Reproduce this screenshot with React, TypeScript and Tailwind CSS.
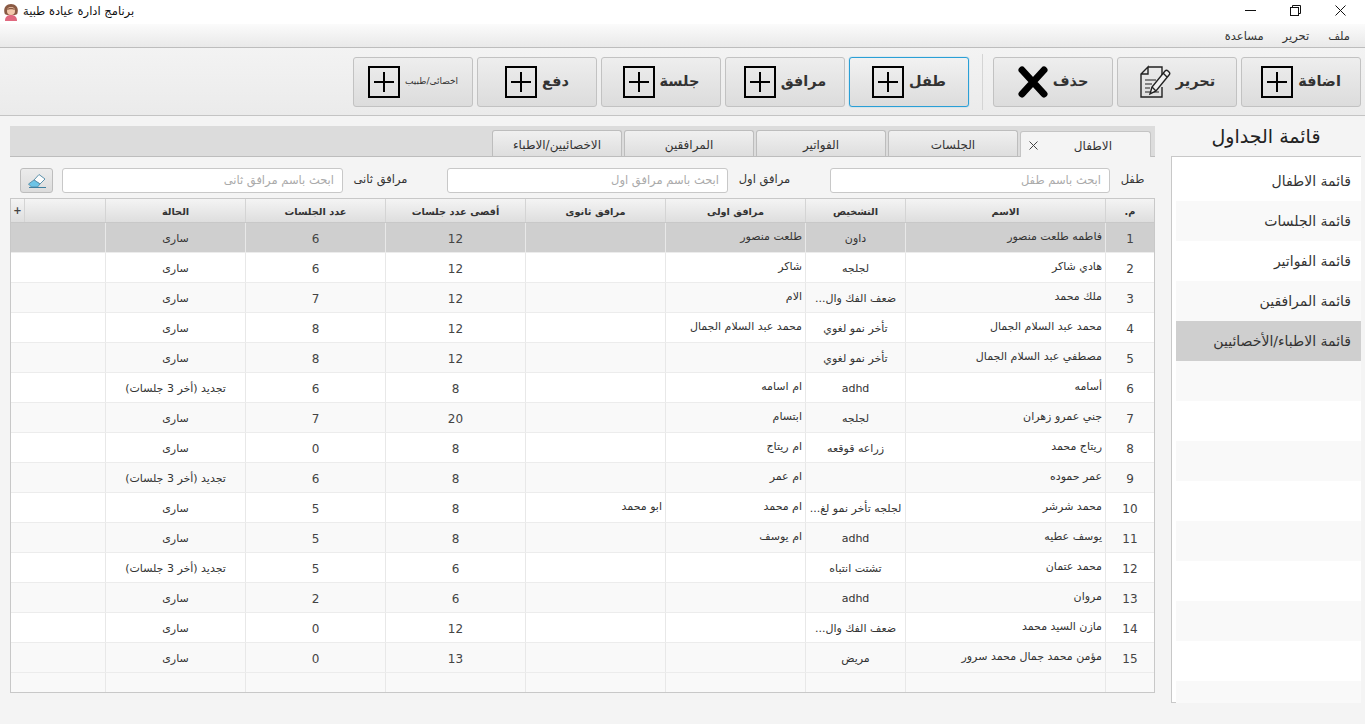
import React from "react";

const FONT = "font-['DejaVu_Sans','Noto_Sans',sans-serif]";

const PlusBox = ({ s = 32 }: { s?: number }) => (
  <svg width={s} height={s} viewBox="0 0 32 32" className="shrink-0">
    <rect x="1" y="1" width="30" height="30" fill="none" stroke="#000" strokeWidth="2" />
    <path d="M16 6V26M6 16H26" stroke="#000" strokeWidth="2" />
  </svg>
);

const XIcon = () => (
  <svg width="30" height="32" viewBox="0 0 30 32" className="shrink-0">
    <path d="M4 4L26 28M26 4L4 28" stroke="#000" strokeWidth="7" strokeLinecap="round" />
  </svg>
);

const NoteIcon = () => (
  <svg width="32" height="34" viewBox="0 0 32 34" className="shrink-0" fill="none" stroke="#222" strokeWidth="1.4">
    <path d="M9 2H23V10M23 22V32H2V9L9 2V9H2" />
    <path d="M6 15H17M6 19H13M6 23H11M6 27H20" strokeWidth="1.2" />
    <path d="M11 29L13 22L26 6C27 5 28 5 29 6L30 7C31 8 31 9 30 10L17 26Z" fill="#f0f0f0" />
    <path d="M13 22L17 26M24 8L28 12" />
  </svg>
);

const Eraser = () => (
  <svg width="20" height="16" viewBox="0 0 20 16">
    <path d="M7 7L12 1.5L18 6L13 11Z" fill="#fdfdfd" stroke="#5d93ad" strokeWidth="1" />
    <path d="M1.5 11L7 7L13 11L10.5 14H4.5Z" fill="#6cc4e6" stroke="#5d93ad" strokeWidth="1" />
    <path d="M2 14.5H19" stroke="#3f7f9f" strokeWidth="1" />
  </svg>
);

const Avatar = () => (
  <svg width="16" height="18" viewBox="0 0 16 18" className="shrink-0">
    <path d="M1.5 10C0 4 4 1 8 1C12 1 16 4 14.5 10C14 12 12 12 8 12C4 12 2 12 1.5 10Z" fill="#8a5a44" />
    <circle cx="8" cy="8" r="4" fill="#f3c9ac" />
    <path d="M4 7C5 4 11 4 12 7C10 6 6 6 4 7Z" fill="#8a5a44" />
    <path d="M2 18C2 13 5 12 8 12C11 12 14 13 14 18Z" fill="#e0697f" />
  </svg>
);

const Btn = ({ label, icon, focus, small }: { label: string; icon: React.ReactNode; focus?: boolean; small?: boolean }) => (
  <div
    className={`w-[120px] h-[50px] rounded-[3px] flex items-center justify-center gap-[5px] bg-gradient-to-b to-[#dcdcdc] border ${
      focus ? "border-[#2a9fd6] shadow-[0_0_1px_#2a9fd6] from-[#f2f2f2]" : "border-[#c2c2c2] from-[#eeeeee]"
    }`}
  >
    <span className={small ? "text-[9px] text-[#333] w-[54px] text-center" : "text-[14.5px] font-semibold text-[#333] pt-[1px]"}>{label}</span>
    {icon}
  </div>
);

const widths = ["w-[49px]", "w-[200px]", "w-[100px]", "w-[140px]", "w-[140px]", "w-[140px]", "w-[140px]", "w-[140px]"];

const heads = ["م.", "الاسم", "التشخيص", "مرافق اولى", "مرافق ثانوى", "أقصى عدد جلسات", "عدد الجلسات", "الحالة"];

const renew = "تجديد (أخر 3 جلسات)";
const ok = "سارى";
const rows: string[][] = [
  ["1", "فاطمه طلعت منصور", "داون", "طلعت منصور", "", "12", "6", ok],
  ["2", "هادي شاكر", "لجلجه", "شاكر", "", "12", "6", ok],
  ["3", "ملك محمد", "ضعف الفك وال...", "الام", "", "12", "7", ok],
  ["4", "محمد عبد السلام الجمال", "تأخر نمو لغوي", "محمد عبد السلام الجمال", "", "12", "8", ok],
  ["5", "مصطفي عبد السلام الجمال", "تأخر نمو لغوي", "", "", "12", "8", ok],
  ["6", "أسامه", "adhd", "ام اسامه", "", "8", "6", renew],
  ["7", "جني عمرو زهران", "لجلجه", "ابتسام", "", "20", "7", ok],
  ["8", "ريتاج محمد", "زراعه قوقعه", "ام ريتاج", "", "8", "0", ok],
  ["9", "عمر حموده", "", "ام عمر", "", "8", "6", renew],
  ["10", "محمد شرشر", "لجلجه تأخر نمو لغ...", "ام محمد", "ابو محمد", "8", "5", ok],
  ["11", "يوسف عطيه", "adhd", "ام يوسف", "", "8", "5", ok],
  ["12", "محمد عتمان", "تشتت انتباه", "", "", "6", "5", renew],
  ["13", "مروان", "adhd", "", "", "6", "2", ok],
  ["14", "مازن السيد محمد", "ضعف الفك وال...", "", "", "12", "0", ok],
  ["15", "مؤمن محمد جمال محمد سرور", "مريض", "", "", "13", "0", ok],
];

const Cell = ({ i, text }: { i: number; text: string }) => {
  const right = i === 1 || i === 3 || i === 4;
  const num = i === 0 || i === 5 || i === 6;
  return (
    <div
      className={`${widths[i]} shrink-0 h-full border-l border-[#e8e8e8] flex whitespace-nowrap overflow-hidden ${
        num ? "text-[12px] text-[#444]" : "text-[11px] text-[#333]"
      } ${right ? "items-start pt-[6px] pr-[3px] justify-start" : "items-center justify-center pt-[3px]"}`}
    >
      {text}
    </div>
  );
};

const Search = ({ label, ph, inputW, labelW }: { label: string; ph: string; inputW: string; labelW: string }) => (
  <>
    <div className={`${labelW} shrink-0 text-[11.5px] text-[#333] text-center pb-[2px]`}>{label}</div>
    <div className={`${inputW} shrink-0 h-[25px] bg-white border border-[#c8c8c8] rounded-[3px] flex items-center px-[8px] text-[11.5px] text-[#aaaaaa]`}>{ph}</div>
  </>
);

const Tab = ({ label }: { label: string }) => (
  <div className="w-[130px] h-[26px] rounded-t-[3px] border border-b-0 border-[#bdbdbd] bg-gradient-to-b from-[#f0f0f0] to-[#dedede] flex items-center justify-center pt-[2px] text-[12px] text-[#333] shrink-0">
    {label}
  </div>
);

const side = ["قائمة الاطفال", "قائمة الجلسات", "قائمة الفواتير", "قائمة المرافقين", "قائمة الاطباء/الأخصائيين", "", "", "", "", "", "", "", "", ""];

export default function App() {
  return (
    <div className={`${FONT} w-[1365px] h-[724px] overflow-hidden bg-[#f4f4f4] flex flex-col`}>
      {/* title bar */}
      <div className="h-[24px] bg-white flex items-center justify-between shrink-0">
        <div className="flex items-center gap-[4px] pl-[3px]">
          <Avatar />
          <span dir="rtl" className="text-[11.5px] text-[#111]">برنامج ادارة عيادة طبية</span>
        </div>
        <div className="flex items-start self-start pt-[5px] pr-[19px] gap-[34px]">
          <svg width="11" height="11" viewBox="0 0 11 11"><path d="M0 5.5H11" stroke="#111" /></svg>
          <svg width="11" height="11" viewBox="0 0 11 11" fill="none" stroke="#111"><rect x="0.5" y="2.5" width="8" height="8" /><path d="M2.5 2.5V0.5H10.5V8.5H8.5" /></svg>
          <svg width="11" height="11" viewBox="0 0 11 11"><path d="M0.5 0.5L10.5 10.5M10.5 0.5L0.5 10.5" stroke="#111" /></svg>
        </div>
      </div>
      {/* menu */}
      <div dir="rtl" className="h-[24px] shrink-0 bg-gradient-to-b from-[#fbfbfb] to-[#e9e9e9] border-b border-[#bdbdbd] flex items-center gap-[19px] pr-[15px] pt-[3px] text-[11.5px] text-[#333]">
        <span>ملف</span>
        <span>تحرير</span>
        <span>مساعدة</span>
      </div>
      {/* toolbar */}
      <div dir="rtl" className="h-[68px] shrink-0 bg-gradient-to-b from-[#f3f3f3] to-[#ebebeb] border-b border-[#c4c4c4] flex items-center gap-[4px] pr-[4px]">
        <Btn label="اضافة" icon={<PlusBox />} />
        <Btn label="تحرير" icon={<NoteIcon />} />
        <Btn label="حذف" icon={<XIcon />} />
        <div className="w-px h-[56px] bg-[#d4d4d4] mr-[6px] ml-[9px]" />
        <Btn label="طفل" icon={<PlusBox />} focus />
        <Btn label="مرافق" icon={<PlusBox />} />
        <Btn label="جلسة" icon={<PlusBox />} />
        <Btn label="دفع" icon={<PlusBox />} />
        <Btn label="اخصائى/طبيب" icon={<PlusBox />} small />
      </div>
      {/* main */}
      <div dir="rtl" className="flex-1 flex pr-[4px] min-h-0">
        {/* sidebar */}
        <aside className="w-[190px] shrink-0 flex flex-col">
          <div className="h-[40px] flex items-center justify-center text-[19px] text-[#222]">قائمة الجداول</div>
          <div className="relative h-[547px] border-l border-t border-[#c8c8c8] bg-white pt-[4px] pl-[4px] overflow-hidden">
            {side.map((s, i) => (
              <div
                key={i}
                className={`h-[40px] flex items-center pr-[10px] pt-[1px] text-[14px] text-[#333] whitespace-nowrap ${
                  i === 4 ? "bg-[#cfcfcf]" : i % 2 === 1 ? "bg-[#f9f9f9]" : "bg-white"
                }`}
              >
                {s}
              </div>
            ))}
            <div className="absolute bottom-0 left-0 w-[4px] h-px bg-[#c8c8c8]" />
          </div>
        </aside>
        {/* content */}
        <section className="w-[1145px] shrink-0 mr-[16px] mt-[10px] flex flex-col">
          <div className="h-[31px] shrink-0 bg-[#dcdcdc] border-b border-[#bdbdbd] flex items-end pr-[4px]">
            <div className="w-[131px] h-[26px] -mb-px rounded-t-[3px] border border-b-0 border-[#c4c4c4] bg-[#f4f4f4] flex items-center pt-[2px] text-[12px] text-[#333] shrink-0 relative pr-[38px]">
              <span>الاطفال</span>
              <svg width="9" height="9" viewBox="0 0 9 9" className="absolute left-[8px] top-[9px]"><path d="M0.5 0.5L8.5 8.5M8.5 0.5L0.5 8.5" stroke="#444" /></svg>
            </div>
            <div className="mr-[2px] flex gap-[2px]">
              <Tab label="الجلسات" />
              <Tab label="الفواتير" />
              <Tab label="المرافقين" />
              <Tab label="الاخصائيين/الاطباء" />
            </div>
          </div>
          <div className="h-[41px] shrink-0 flex items-center pt-[6px]">
            <Search label="طفل" ph="ابحث باسم طفل" labelW="w-[45px]" inputW="w-[280px]" />
            <div className="w-[29px] shrink-0" />
            <Search label="مرافق اول" ph="ابحث باسم مرافق اول" labelW="w-[73px]" inputW="w-[281px]" />
            <div className="w-[29px] shrink-0" />
            <Search label="مرافق ثانى" ph="ابحث باسم مرافق ثانى" labelW="w-[75px]" inputW="w-[281px]" />
            <div className="mr-[9px] w-[33px] h-[25px] shrink-0 rounded-[3px] border border-[#bdbdbd] bg-gradient-to-b from-[#ececec] to-[#dcdcdc] flex items-center justify-center">
              <Eraser />
            </div>
          </div>
          {/* table */}
          <div className="h-[495px] shrink-0 border border-[#c8c8c8] bg-[#f9f9f9] flex flex-col overflow-hidden">
            <div className="h-[24px] shrink-0 flex border-b border-[#c8c8c8] bg-gradient-to-b from-[#f4f4f4] to-[#dedede]">
              {heads.map((h, i) => (
                <div key={i} className={`${widths[i]} shrink-0 border-l border-[#d4d4d4] flex items-center justify-center pt-[4px] text-[9.75px] font-bold text-[#333] whitespace-nowrap`}>
                  {h}
                </div>
              ))}
              <div className="w-[81px] shrink-0 border-l border-[#d4d4d4]" />
              <div className="flex-1 flex items-center justify-center text-[10px] font-bold text-[#444]">+</div>
            </div>
            {rows.map((r, ri) => (
              <div
                key={ri}
                className={`h-[30px] shrink-0 flex border-b border-[#ececec] ${
                  ri === 0 ? "bg-[#cfcfcf]" : ri % 2 === 0 ? "bg-[#f9f9f9]" : "bg-white"
                }`}
              >
                {r.map((c, i) => (
                  <Cell key={i} i={i} text={c} />
                ))}
              </div>
            ))}
            <div className="flex-1 flex">
              {widths.map((w, i) => (
                <div key={i} className={`${w} shrink-0 border-l border-[#e8e8e8]`} />
              ))}
            </div>
          </div>
        </section>
      </div>
    </div>
  );
}
